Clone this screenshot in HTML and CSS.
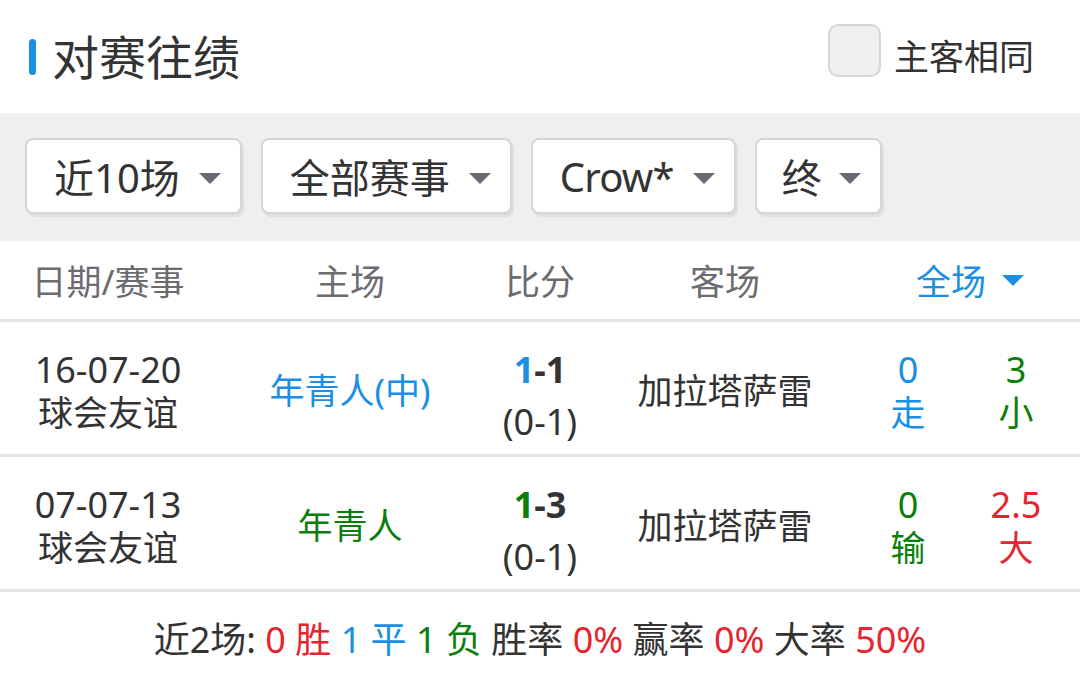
FILE: index.html
```html
<!DOCTYPE html>
<html lang="zh-CN">
<head>
<meta charset="utf-8">
<link rel="stylesheet" href="styles.css">
</head>
<body>
<div class="page">
  <div class="topbar">
    <div class="title"><span class="bar"></span><span class="title-text">对赛往绩</span></div>
    <label class="same"><span class="checkbox"></span><span>主客相同</span></label>
  </div>
  <div class="filters">
    <div class="btn"><span>近10场</span><span class="caret"></span></div>
    <div class="btn"><span>全部赛事</span><span class="caret"></span></div>
    <div class="btn"><span class="latin">Crow*</span><span class="caret"></span></div>
    <div class="btn short"><span>终</span><span class="caret"></span></div>
  </div>
  <div class="table">
    <div class="row head">
      <div class="cell">日期/赛事</div>
      <div class="cell">主场</div>
      <div class="cell">比分</div>
      <div class="cell">客场</div>
      <div class="cell span2 blue">全场 <span class="caret blue-caret"></span></div>
    </div>
    <div class="row">
      <div class="cell stack"><span class="num">16-07-20</span><span>球会友谊</span></div>
      <div class="cell blue">年青人(中)</div>
      <div class="cell score"><span class="main"><span class="blue">1</span>-1</span><span class="half">(0-1)</span></div>
      <div class="cell">加拉塔萨雷</div>
      <div class="cell stack blue"><span class="num">0</span><span>走</span></div>
      <div class="cell stack green"><span class="num">3</span><span>小</span></div>
    </div>
    <div class="row">
      <div class="cell stack"><span class="num">07-07-13</span><span>球会友谊</span></div>
      <div class="cell green">年青人</div>
      <div class="cell score"><span class="main"><span class="green">1</span>-3</span><span class="half">(0-1)</span></div>
      <div class="cell">加拉塔萨雷</div>
      <div class="cell stack green"><span class="num">0</span><span>输</span></div>
      <div class="cell stack red"><span class="num">2.5</span><span>大</span></div>
    </div>
  </div>
  <div class="summary">近2场: <span class="red">0 胜</span> <span class="blue">1 平</span> <span class="green">1 负</span> 胜率 <span class="red">0%</span> 赢率 <span class="red">0%</span> 大率 <span class="red">50%</span></div>
</div>
</body>
</html>
```

FILE: styles.css
```css
* { box-sizing: border-box; }
html, body { margin: 0; padding: 0; background: #fff; }
body {
  font-family: "Noto Sans", "Noto Sans CJK SC", sans-serif;
  color: #333;
  width: 1080px;
  height: 684px;
  overflow: hidden;
}
.topbar {
  height: 113px;
  display: flex;
  align-items: center;
  justify-content: space-between;
  padding: 0 46px 4px 29px;
}
.title { display: flex; align-items: center; }
.bar {
  width: 7px;
  height: 36px;
  border-radius: 4px;
  background: #1a8fe3;
  margin-right: 16px;
  margin-top: 4px;
}
.title-text {
  font-family: "Noto Sans CJK SC", sans-serif;
  font-size: 47px;
  line-height: 1;
  color: #333;
}
.same {
  display: flex;
  align-items: center;
  font-family: "Noto Sans CJK SC", sans-serif;
  font-size: 35px;
  color: #333;
}
.checkbox {
  width: 53px;
  height: 53px;
  border: 2px solid #d6d6d6;
  border-radius: 10px;
  background: #efefef;
  margin-right: 13px;
  margin-top: -8px;
}
.filters {
  height: 128px;
  background: #efefef;
  display: flex;
  align-items: flex-start;
  gap: 19px;
  padding: 25px 0 0 25px;
}
.btn {
  height: 76px;
  background: #fff;
  border: 2px solid #d5d5d5;
  border-radius: 8px;
  box-shadow: 2px 3px 1px rgba(0,0,0,0.07);
  display: flex;
  align-items: center;
  padding: 0 19px 0 27px;
  font-size: 40px;
  color: #333;
  gap: 19px;
}
.btn.short { padding-left: 25px; gap: 17px; }
.latin { letter-spacing: -0.8px; }
.caret {
  width: 0;
  height: 0;
  border-left: 11px solid transparent;
  border-right: 11px solid transparent;
  border-top: 11px solid #666a73;
  margin-top: 4px;
}
.row {
  display: grid;
  grid-template-columns: 216px 268px 112px 258px 108px 108px;
  height: 135px;
  border-bottom: 3px solid #e4e4e4;
  font-size: 35px;
}
.row.head {
  height: 81px;
  color: #6b6b70;
  font-size: 35px;
}
.cell {
  display: flex;
  align-items: center;
  justify-content: center;
  text-align: center;
  white-space: nowrap;
}
.head .cell { padding-bottom: 2px; }
.span2 { grid-column: span 2; padding-left: 16px; gap: 16px; }
.blue-caret { border-top-color: #1a8fe3; margin-top: 2px; }
.stack {
  flex-direction: column;
  line-height: 43px;
  padding-top: 6px;
}
.num { font-size: 36px; }
.score {
  flex-direction: column;
  padding-top: 24px;
}
.score .main {
  font-weight: 700;
  font-size: 36px;
  line-height: 44px;
}
.score .half { font-size: 36px; line-height: 60px; }
.blue { color: #1a8fe3; }
.green { color: #0b7f0b; }
.red { color: #e5262e; }
.summary {
  height: 92px;
  text-align: center;
  line-height: 92px;
  font-size: 36px;
  white-space: nowrap;
  padding-top: 2px;
}
```
